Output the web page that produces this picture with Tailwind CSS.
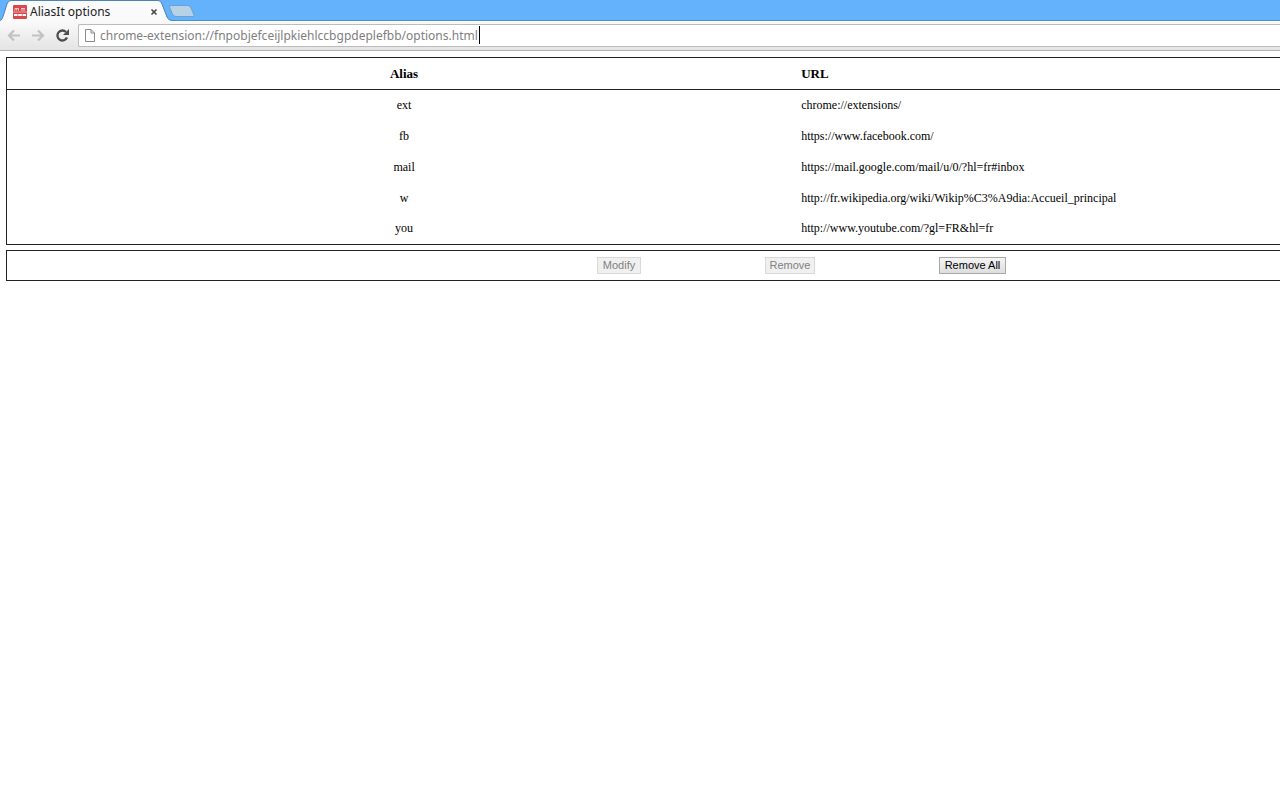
<!DOCTYPE html>
<html lang="en">
<head>
<meta charset="utf-8">
<title>AliasIt options</title>
<script src="https://cdn.jsdelivr.net/npm/@tailwindcss/browser@4"></script>
</head>
<body class="min-h-screen bg-white font-['Liberation_Serif',serif] text-black">
<header class="font-['Noto_Sans',sans-serif]">
  <div class="flex h-[21px] border-b border-[#4c8fcd] bg-[#64b1fc]">
    <div class="relative h-[21px] w-[172px] shrink-0">
      <svg class="absolute inset-0" width="172" height="21" viewBox="0 0 172 21" aria-hidden="true">
        <path d="M0 20.5C2 20 2.500 18 3.500 15L7 4Q8 .5 11 .5H158Q161 .5 162 4L167 17Q168.500 20.500 172 20.500V21H0Z" fill="#fafafa"/>
        <path d="M0 20.500C2 20 2.500 18 3.500 15L7 4Q8 .5 11 .5H158Q161 .5 162 4L167 17Q168.500 20.500 172 20.500" fill="none" stroke="#4b84b8"/>
      </svg>
      <div class="relative flex h-full items-center pt-[2px] pl-[13px]">
        <svg width="14" height="14" viewBox="0 0 14 14" aria-hidden="true">
          <rect width="14" height="14" rx="1" fill="#d8474b"/>
          <path d="M2 5.500V3.500H5.500V5.500M3.700 3.500V5.500M8 3.500H12M8 5H12" fill="none" stroke="#f6c9ca" stroke-width="1"/>
          <path d="M0 7H14" stroke="#efa3a5"/>
          <path d="M1 10H4.500M5.200 10H8.800M9.500 10H13" fill="none" stroke="#fff" stroke-width="2"/>
        </svg>
        <span class="ml-[3px] w-[120px] text-[12px] leading-[16px] text-[#222]">AliasIt options</span>
        <button type="button" aria-label="Close tab" class="flex size-2 items-center justify-center">
          <svg width="8" height="8" viewBox="0 0 8 8" aria-hidden="true"><path d="M1.500 1.500L6.500 6.500M6.500 1.500L1.500 6.500" stroke="#444" stroke-width="1.600"/></svg>
        </button>
      </div>
    </div>
    <button type="button" aria-label="New tab" class="-ml-1 h-[20px] w-[28px]">
      <svg width="28" height="20" viewBox="0 0 28 20" aria-hidden="true"><path d="M3 5.500H20Q22 5.500 23 8L26 15Q26.500 16.500 25 16.500H8Q5.500 16.500 4.500 14L1.500 7Q1 5.500 3 5.500Z" fill="#b7d1e6" stroke="#6ba0d0"/></svg>
    </button>
  </div>
  <div class="flex h-[30px] items-center border-b border-[#b3b3b3] bg-linear-to-b from-[#fafafa] to-[#e4e4e4] pl-[7px]">
    <button type="button" aria-label="Back" disabled class="mr-[10px]">
      <svg width="14" height="14" viewBox="0 0 14 14" aria-hidden="true"><path d="M13 6.500H2.500M7 1.500L2 6.500L7 11.500" fill="none" stroke="#c2c2c2" stroke-width="2.200"/></svg>
    </button>
    <button type="button" aria-label="Forward" disabled class="mr-[10px]">
      <svg width="14" height="14" viewBox="0 0 14 14" aria-hidden="true"><path d="M1 6.500H11.500M7 1.500L12 6.500L7 11.500" fill="none" stroke="#c2c2c2" stroke-width="2.200"/></svg>
    </button>
    <button type="button" aria-label="Reload" class="mr-[8px]">
      <svg width="15" height="14" viewBox="0 0 15 14" aria-hidden="true"><path d="M12 8.500A5 5 0 1 1 11 3" fill="none" stroke="#4c4c4c" stroke-width="2.300"/><path d="M14 0V6H8Z" fill="#4c4c4c"/></svg>
    </button>
    <div class="flex h-[23px] flex-1 items-center rounded-l-[2px] border border-r-0 border-[#bcbcbc] bg-white pl-[6px]">
      <svg width="10" height="13" viewBox="0 0 10 13" aria-hidden="true"><path d="M.5 .5H6L9.500 4V12.500H.5ZM6 .5V4H9.500" fill="#fff" stroke="#888"/></svg>
      <div class="relative ml-[5px] flex-1 pb-px">
        <input type="text" aria-label="Address" value="chrome-extension://fnpobjefceijlpkiehlccbgpdeplefbb/options.html" class="block h-[20px] w-full bg-transparent text-[12px] text-[#808080] outline-none">
        <span class="absolute top-px left-[379px] h-[18px] w-px bg-black"></span>
      </div>
    </div>
  </div>
</header>
<main class="pt-[6px] pl-[6px] text-[12px] leading-[15px]">
  <table class="w-full table-fixed border-collapse border border-r-0 border-[#222]">
    <thead>
      <tr class="h-8 border-b border-[#222] text-[13px]"><th scope="col" class="w-[62.4%] p-0 text-center">Alias</th><th scope="col" class="p-0 text-left">URL</th></tr>
    </thead>
    <tbody>
      <tr class="h-[31px]"><td class="p-0 text-center">ext</td><td class="p-0">chrome://extensions/</td></tr>
      <tr class="h-[31px]"><td class="p-0 text-center">fb</td><td class="p-0">https://www.facebook.com/</td></tr>
      <tr class="h-[31px]"><td class="p-0 text-center">mail</td><td class="p-0">https://mail.google.com/mail/u/0/?hl=fr#inbox</td></tr>
      <tr class="h-[31px]"><td class="p-0 text-center">w</td><td class="p-0">http://fr.wikipedia.org/wiki/Wikip%C3%A9dia:Accueil_principal</td></tr>
      <tr class="h-[31px]"><td class="p-0 text-center">you</td><td class="p-0">http://www.youtube.com/?gl=FR&amp;hl=fr</td></tr>
    </tbody>
  </table>
  <div class="mt-[5px] flex h-[31px] items-center gap-[124px] border border-r-0 border-[#222] pl-[590px] font-['Liberation_Sans',sans-serif] text-[11px]">
    <button type="button" disabled class="h-[17px] w-[44px] border border-[#d9d9d9] bg-[#f0f0f0] text-[#808080]">Modify</button>
    <button type="button" disabled class="h-[17px] w-[50px] border border-[#d9d9d9] bg-[#f0f0f0] text-[#808080]">Remove</button>
    <button type="button" class="h-[17px] w-[67px] border border-[#a9a9a9] bg-linear-to-b from-[#f4f4f4] to-[#dedede] text-black">Remove All</button>
  </div>
</main>
</body>
</html>
